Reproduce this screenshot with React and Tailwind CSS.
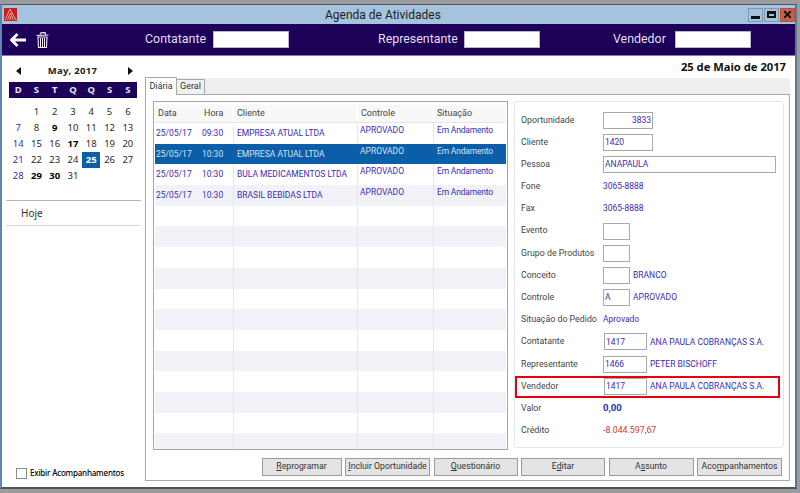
import React from "react";
import { X } from "lucide-react";

const FONT = "font-['Noto_Sans','Open_Sans',sans-serif]";
const BODY = "font-['Roboto','Noto_Sans',sans-serif]";
const BLUE = "text-[#3b2bb5]";
const VALUE = "text-[#3b2bb5] text-[8.5px]";

const weeks = [
  ["", "1", "2", "3", "4", "5", "6"],
  ["7", "8", "9", "10", "11", "12", "13"],
  ["14", "15", "16", "17", "18", "19", "20"],
  ["21", "22", "23", "24", "25", "26", "27"],
  ["28", "29", "30", "31", "", "", ""],
];
const boldDays = ["9", "17", "29", "30"];

const rows = [
  { data: "25/05/17", hora: "09:30", cliente: "EMPRESA ATUAL LTDA" },
  { data: "25/05/17", hora: "10:30", cliente: "EMPRESA ATUAL LTDA", selected: true },
  { data: "25/05/17", hora: "10:30", cliente: "BULA MEDICAMENTOS LTDA" },
  { data: "25/05/17", hora: "10:30", cliente: "BRASIL BEBIDAS LTDA" },
];

function Logo() {
  return (
    <svg width="13" height="13" viewBox="0 0 13 13" className="ml-[2px] shrink-0">
      <rect width="13" height="13" fill="#c8201c" />
      <path d="M1 12 L6 1 L12 12 M3.5 12 L6.5 5 L9.5 12 M6 12 L7 8" stroke="#f0b4a8" strokeWidth="0.9" fill="none" />
    </svg>
  );
}

function WinButton({ children, className = "" }) {
  return (
    <div className={`w-[15px] h-[14px] border border-[#7f97ad] flex items-center justify-center ${className}`}>
      {children}
    </div>
  );
}

function TrashIcon() {
  return (
    <svg width="13" height="16" viewBox="0 0 13 16" fill="none" stroke="#f2eef8">
      <path d="M0.5 3.5 L12.5 3 M4 2.5 L5 0.8 L9 0.5 L9.6 2.5" strokeWidth="1.2" />
      <path d="M2 5 H11 L10.5 15.5 H2.5 Z" strokeWidth="1.1" />
      <path d="M4.5 6 V15 M6.5 6 V15 M8.5 6 V15" strokeWidth="1" />
    </svg>
  );
}

function NavField({ label, labelClass }) {
  return (
    <div className="flex items-center">
      <span className={`text-[12.4px] text-[#e4def0] whitespace-nowrap ${BODY} ${labelClass}`}>{label}</span>
      <div className="w-[76px] h-[17px] bg-white border border-[#b9b4cc]" />
    </div>
  );
}

function Calendar() {
  return (
    <div className="pl-[7px] pr-[5px]">
      <div className="flex items-center justify-between px-[7px] h-[14px] mt-[8px] text-[#222]">
        <svg width="5" height="8" viewBox="0 0 5 8"><path d="M5 0 L0 4 L5 8 Z" fill="#111" /></svg>
        <span className="text-[9.5px] font-bold tracking-[0.3px] pr-[4px]">May, 2017</span>
        <svg width="5" height="8" viewBox="0 0 5 8"><path d="M0 0 L5 4 L0 8 Z" fill="#111" /></svg>
      </div>
      <div className="grid grid-cols-7 w-[128px] h-[16px] mt-[4px] bg-[#1d0058] items-center text-center text-[9.5px] font-bold text-[#e8e4f2]">
        {["D", "S", "T", "Q", "Q", "S", "S"].map((d, i) => (
          <span key={i}>{d}</span>
        ))}
      </div>
      <div className="grid grid-cols-7 w-[128px] mt-[6px] text-center text-[9.5px] text-[#2a2a2a]">
        {weeks.flat().map((d, i) => (
          <span
            key={i}
            className={`h-[16px] leading-[16px] ${i % 7 === 0 ? BLUE : ""} ${boldDays.includes(d) ? "font-bold text-black" : ""} ${d === "25" ? "bg-[#0b5ea8] text-white font-bold" : ""}`}
          >
            {d}
          </span>
        ))}
      </div>
    </div>
  );
}

function Sidebar() {
  return (
    <div className="w-[143px] shrink-0 flex flex-col">
      <Calendar />
      <div className="mt-[16px] ml-[4px] w-[135px] h-[26px] border-y border-t-[#b5b5b5] border-b-[#d8d8d8] pl-[15px] flex items-center text-[10px] text-[#333]">
        Hoje
      </div>
      <div className="mt-auto mb-[8px] ml-[14px] flex items-center">
        <div className="w-[11px] h-[11px] bg-white border border-[#8a8a8a]" />
        <span className="ml-[3px] text-[8px] font-medium text-black whitespace-nowrap tracking-[-0.2px]">Exibir Acompanhamentos</span>
      </div>
    </div>
  );
}

function Grid() {
  return (
    <div className="w-[355px] h-[349px] ml-[7px] mt-[6px] border border-[#a5a5a5] p-[1px] pt-[3px] overflow-hidden text-[9px] whitespace-nowrap">
      <div className="flex h-[18px] items-center text-[#444] bg-[#f8f8f8] border-b border-[#e6e6e6]">
        <div className="w-[79px] h-full flex items-center pl-[3px] border-r-2 border-white">
          <span className="w-[46px]">Data</span>
          <span>Hora</span>
        </div>
        <div className="w-[124px] h-full flex items-center pl-[3px] border-r-2 border-white">Cliente</div>
        <div className="w-[76px] h-full flex items-center pl-[3px] border-r-2 border-white">Controle</div>
        <div className="flex-1 h-full flex items-center pl-[3px]">Situação</div>
      </div>
      {Array.from({ length: 16 }).map((_, i) => {
        const r = rows[i];
        const tint = r?.selected ? "bg-[#0b5ea8]" : i % 2 === 1 ? "bg-[#f1f2f8]" : "bg-white";
        const text = r?.selected ? "text-[#d6e4f5]" : BLUE;
        const line = r?.selected ? "border-transparent" : "border-[#e8e8e8]";
        return (
          <div key={i} className={`flex h-[20.7px] shrink-0 text-[8.5px] ${tint} ${text}`}>
            <div className={`w-[79px] flex items-center border-r ${line}`}>
              {r && <span className="w-[47px] pl-[1px]">{r.data}</span>}
              {r && <span>{r.hora}</span>}
            </div>
            <div className={`w-[124px] flex items-center pl-[3px] border-r ${line}`}>{r?.cliente}</div>
            <div className={`w-[76px] flex items-start pt-[1px] pl-[2px] border-r ${line}`}>{r && "APROVADO"}</div>
            <div className="flex-1 flex items-start pt-[1px] pl-[3px] tracking-[-0.2px]">{r && "Em Andamento"}</div>
          </div>
        );
      })}
    </div>
  );
}

function Field({ label, children }) {
  return (
    <div className="flex items-center h-[22.2px]">
      <span className="w-[82px] shrink-0 text-[#444]">{label}</span>
      {children}
    </div>
  );
}

function Box({ w, value, right, className = "" }) {
  return (
    <div className={`h-[17px] shrink-0 bg-white border border-[#a9a9a9] flex items-center px-[1px] ${VALUE} ${right ? "justify-end" : ""} ${className}`} style={{ width: w }}>
      {value}
    </div>
  );
}

function Detail() {
  return (
    <div className="w-[270px] h-[347px] ml-[6px] mt-[6px] rounded-[3px] border border-[#e2e6ee] pl-[6px] pt-[7px] text-[8.8px] whitespace-nowrap">
      <Field label="Oportunidade"><Box w={50} value="3833" right /></Field>
      <Field label="Cliente"><Box w={50} value="1420" /></Field>
      <Field label="Pessoa"><Box w={173} value="ANAPAULA" /></Field>
      <Field label="Fone"><span className={VALUE}>3065-8888</span></Field>
      <Field label="Fax"><span className={VALUE}>3065-8888</span></Field>
      <Field label="Evento"><Box w={27} /></Field>
      <Field label="Grupo de Produtos"><Box w={27} /></Field>
      <Field label="Conceito">
        <Box w={27} />
        <span className={`ml-[3px] ${VALUE}`}>BRANCO</span>
      </Field>
      <Field label="Controle">
        <Box w={27} value="A" />
        <span className={`ml-[3px] ${VALUE}`}>APROVADO</span>
      </Field>
      <Field label="Situação do Pedido"><span className={VALUE}>Aprovado</span></Field>
      <Field label="Contatante">
        <Box w={43} value="1417" className="ml-[1px]" />
        <span className={`ml-[3px] ${VALUE}`}>ANA PAULA COBRANÇAS S.A.</span>
      </Field>
      <Field label="Representante">
        <Box w={44} value="1466" />
        <span className={`ml-[3px] ${VALUE}`}>PETER BISCHOFF</span>
      </Field>
      <div className="relative">
        <Field label="Vendedor">
          <Box w={43} value="1417" className="ml-[1px]" />
          <span className={`ml-[3px] ${VALUE}`}>ANA PAULA COBRANÇAS S.A.</span>
        </Field>
        <div className="absolute left-[-6px] top-[1px] w-[265px] h-[22px] border-2 border-[#e8000c]" />
      </div>
      <Field label="Valor"><span className="font-bold text-[#1c2fc0] text-[9.5px]">0,00</span></Field>
      <Field label="Crédito"><span className="text-[#d8343c] text-[8.8px]">-8.044.597,67</span></Field>
    </div>
  );
}

function ActionButton({ width, children }) {
  return (
    <button className={`${width} h-[18px] bg-[#e4e4e4] border border-[#9a9a9a] text-[8.7px] text-[#333] whitespace-nowrap flex items-center justify-center`}>
      <span>{children}</span>
    </button>
  );
}

function TabPanel() {
  return (
    <div className={`w-[645px] h-[403px] mt-[2px] flex flex-col ${BODY}`}>
      <div className="h-[16px] bg-[#eeeeee] flex items-end text-[9px] text-[#333]">
        <div className="relative z-10 -mb-[1px] w-[32px] h-[18px] bg-white border border-b-0 border-[#a9a9a9] flex items-center justify-center">Diária</div>
        <div className="w-[28px] h-[15px] bg-[#f0f0f0] border border-l-0 border-b-0 border-[#a9a9a9] flex items-center justify-center">Geral</div>
      </div>
      <div className="flex-1 border border-[#a9a9a9] bg-white flex flex-col">
        <div className="flex">
          <Grid />
          <Detail />
        </div>
        <div className="flex justify-end gap-[3.5px] pr-[7px] mt-[8px]">
          <ActionButton width="w-[80px]"><u>R</u>eprogramar</ActionButton>
          <ActionButton width="w-[85px]"><u>I</u>ncluir Oportunidade</ActionButton>
          <ActionButton width="w-[84px]"><u>Q</u>uestionário</ActionButton>
          <ActionButton width="w-[84px]">E<u>d</u>itar</ActionButton>
          <ActionButton width="w-[85px]">A<u>s</u>sunto</ActionButton>
          <ActionButton width="w-[85px]">Aco<u>m</u>panhamentos</ActionButton>
        </div>
      </div>
    </div>
  );
}

export default function App() {
  return (
    <div className={`w-[800px] h-[493px] bg-[#9c9c9c] pt-[4px] pr-[3px] pb-[4px] overflow-hidden ${FONT}`}>
      <div className="h-full border border-[#4c5560] border-l-[2px] border-l-[#5f86b0] border-r-[2px] border-r-[#5f7590] border-b-[2px] bg-white flex flex-col">
        {/* title bar */}
        <div className="h-[19px] bg-[#a6c3dd] flex items-center shrink-0 relative">
          <Logo />
          <span className={`absolute left-[323px] text-[12px] text-[#222] ${BODY}`}>Agenda de Atividades</span>
          <div className="ml-auto flex gap-[1px] pr-[0px]">
            <WinButton><div className="w-[9px] h-[3px] bg-[#111] mt-[5px]" /></WinButton>
            <WinButton><div className="w-[9px] h-[7px] border-2 border-t-[3px] border-[#111]" /></WinButton>
            <WinButton className="bg-[#c9604a] border-[#b04f3c]"><X size={11} strokeWidth={4} color="#111" /></WinButton>
          </div>
        </div>
        {/* nav bar */}
        <div className="h-[32px] bg-[#1d0058] flex items-center shrink-0 border-b border-[#8a78b0]">
          <svg width="16" height="14" viewBox="0 0 16 14" className="ml-[8px]">
            <path d="M7.5 1 L1.5 7 L7.5 13 M2 7 H16" stroke="#fff" strokeWidth="2.8" fill="none" />
          </svg>
          <div className="ml-[10px]"><TrashIcon /></div>
          <div className="ml-[96px]"><NavField label="Contatante" labelClass="mr-[7px] w-[61px]" /></div>
          <div className="ml-[89px]"><NavField label="Representante" labelClass="mr-[7px] w-[79px]" /></div>
          <div className="ml-[73px]"><NavField label="Vendedor" labelClass="mr-[8px] w-[54px]" /></div>
        </div>
        {/* content */}
        <div className="flex-1 flex min-h-0">
          <Sidebar />
          <div className="flex flex-col">
            <div className="h-[20px] w-[641px] flex items-end justify-end text-[11.2px] font-bold text-[#111]">
              25 de Maio de 2017
            </div>
            <TabPanel />
          </div>
        </div>
      </div>
    </div>
  );
}
